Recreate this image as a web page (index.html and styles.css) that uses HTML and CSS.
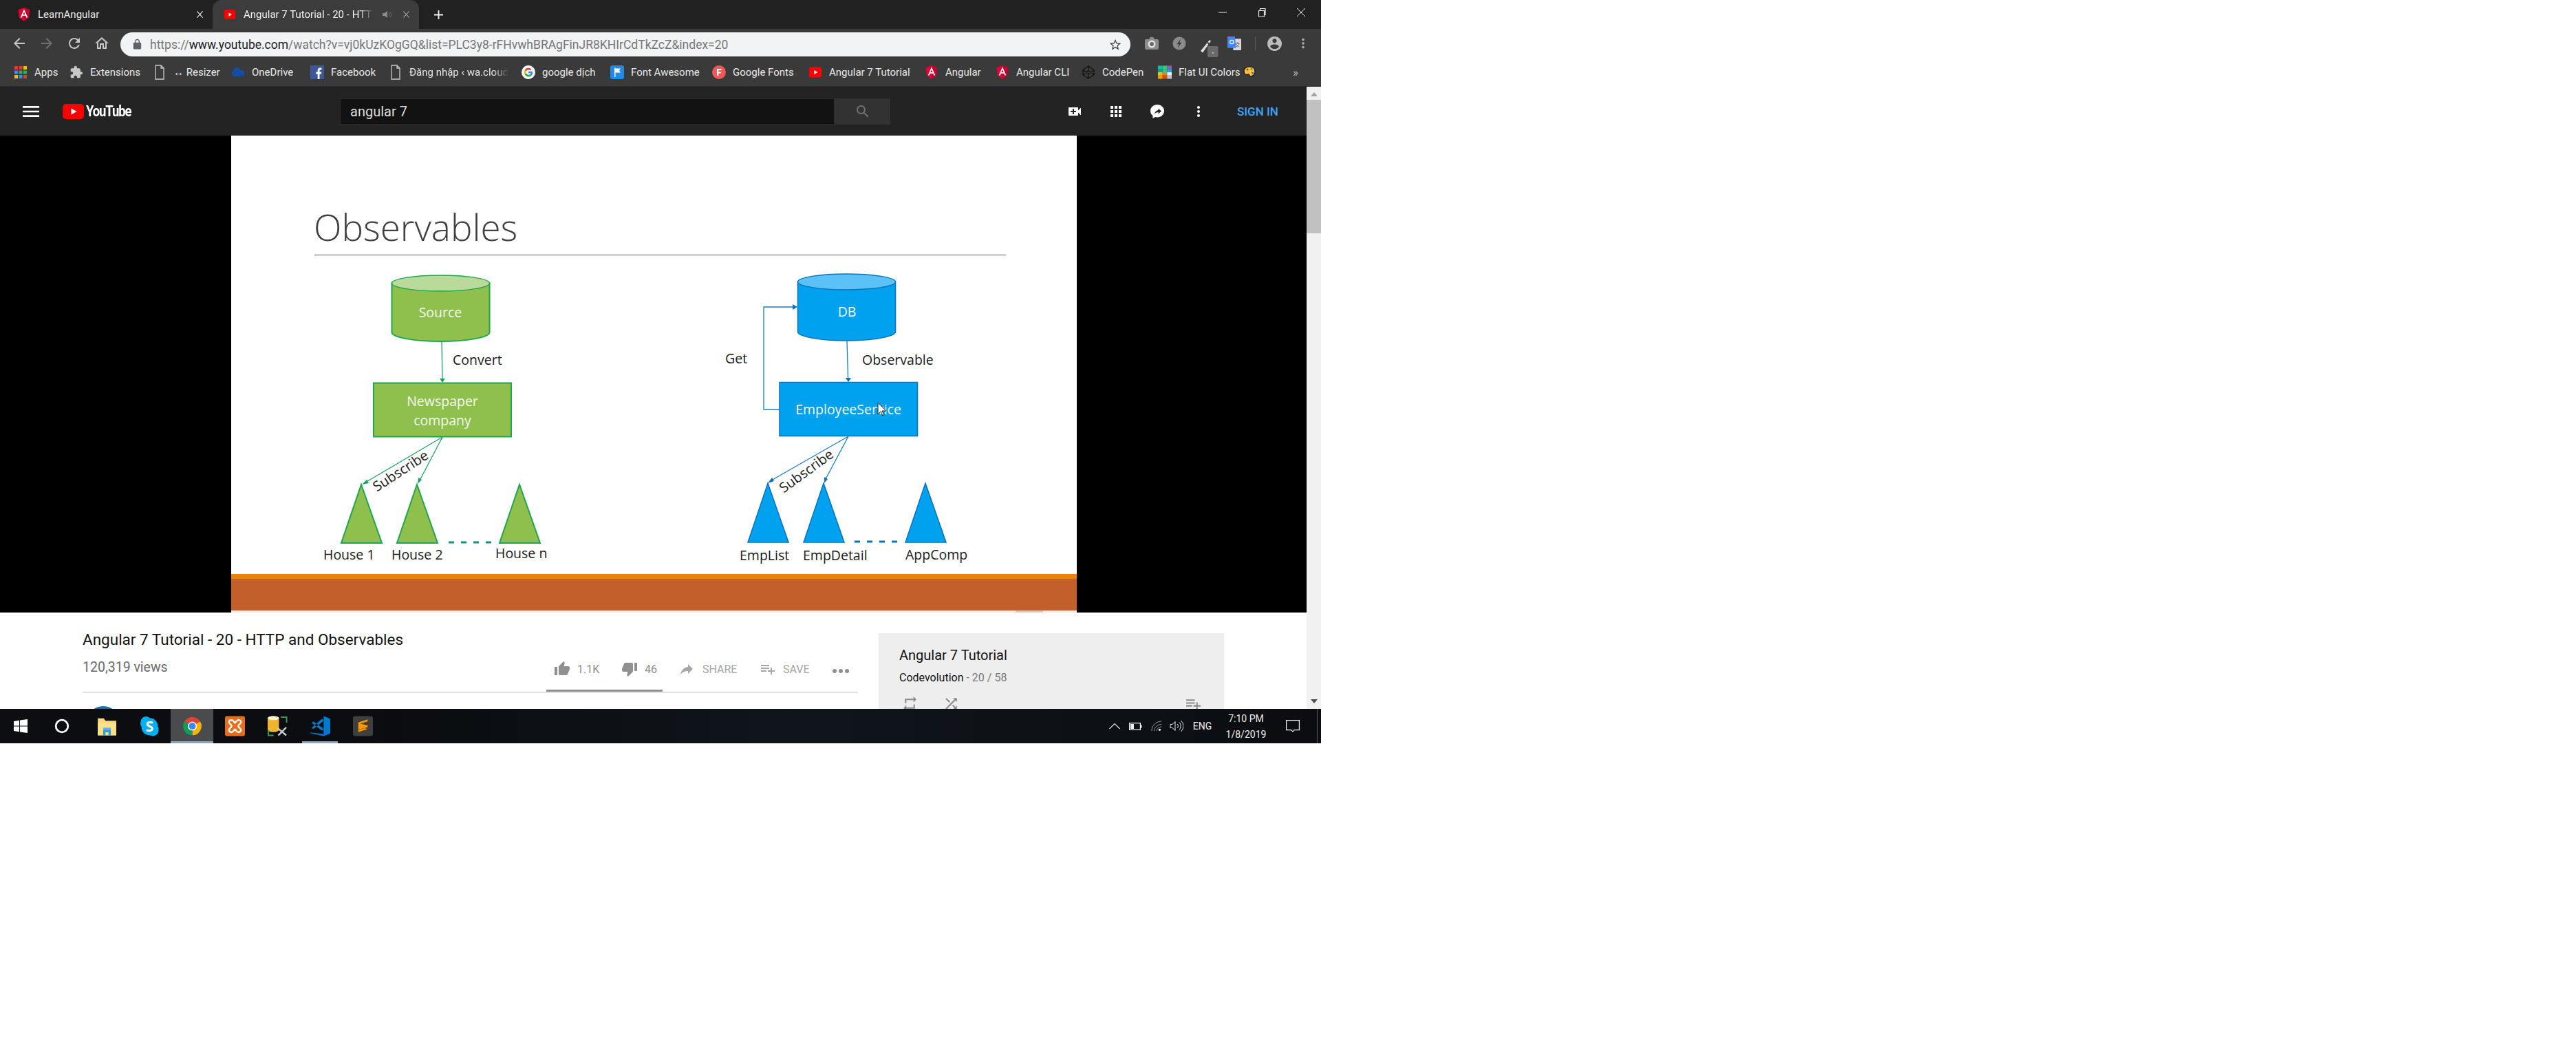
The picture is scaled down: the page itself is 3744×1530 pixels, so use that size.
FILE: index.html
```html
<!DOCTYPE html>
<html lang="en">
<head>
    <meta charset="UTF-8">
    <title>Angular 7 Tutorial - 20 - HTTP and Observables - YouTube</title>
    <link rel="stylesheet" href="styles.css">
</head>
<body>
    <svg class="sprites" width="0" height="0">
        <symbol id="i-angular" viewBox="0 0 24 26">
            <path d="M12 0L1 4l1.700 15L12 26z" fill="#dd0031"/>
            <path d="M12 0l11 4-1.700 15L12 26z" fill="#c3002f"/>
            <path d="M12 3L5 19h2.700l1.400-3.600h5.800l1.400 3.600H19zm-2 10l2-5 2 5z" fill="#fff"/>
        </symbol>
        <symbol id="i-yt" viewBox="0 0 24 24">
            <rect x="1" y="3" width="22" height="18" rx="4" fill="#f00"/>
            <path d="M10 8.500v7l6-3.500z" fill="#fff"/>
        </symbol>
        <symbol id="i-doc" viewBox="0 0 14 22">
            <path d="M1 1h8l4 4v16H1zM9 1v4h4" fill="none" stroke="#c8c8c8" stroke-width="1.300"/>
        </symbol>
        <symbol id="i-google" viewBox="0 0 24 24">
            <circle cx="12" cy="12" r="12" fill="#fff"/>
            <path d="M5.500 8.300A7.500 7.500 0 0 1 17.300 6.700l-2.300 2.200a4.400 4.400 0 0 0-6.700 1.200z" fill="#ea4335"/>
            <path d="M5.500 8.300l2.800 1.800a4.400 4.400 0 0 0 0 3.800l-2.800 1.800a7.500 7.500 0 0 1 0-7.400z" fill="#fbbc05"/>
            <path d="M5.500 15.700l2.800-1.800a4.400 4.400 0 0 0 6.800 1.500l2.600 2A7.500 7.500 0 0 1 5.500 15.700z" fill="#34a853"/>
            <path d="M12 10.600h7.200a7.500 7.500 0 0 1-1.500 6.800l-2.600-2a3.600 3.600 0 0 0 1.100-1.900H12z" fill="#4285f4"/>
        </symbol>
        <symbol id="i-plus-list" viewBox="0 0 24 24">
            <path d="M14 10H2v2h12v-2zm0-4H2v2h12V6zm4 8v-4h-2v4h-4v2h4v4h2v-4h4v-2h-4zM2 16h8v-2H2v2z"/>
        </symbol>
        <symbol id="i-dots" viewBox="0 0 24 24">
            <path d="M12 8c1.100 0 2-.9 2-2s-.9-2-2-2-2 .9-2 2 .9 2 2 2zm0 2c-1.100 0-2 .9-2 2s.9 2 2 2 2-.9 2-2-.9-2-2-2zm0 6c-1.100 0-2 .9-2 2s.9 2 2 2 2-.9 2-2-.9-2-2-2z"/>
        </symbol>
    </svg>

    <div class="screen">
        <!-- tabs -->
        <div class="tabstrip">
            <div class="tab">
                <svg class="favicon"><use href="#i-angular"/></svg>
                <span class="tab-title">LearnAngular</span>
                <svg class="tab-close" viewBox="0 0 12 12"><path d="M1.500 1l9 10M10.500 1l-9 10"/></svg>
            </div>
            <div class="tab tab-active">
                <svg class="favicon"><use href="#i-yt"/></svg>
                <span class="tab-title tab-fade">Angular 7 Tutorial - 20 - HTT</span>
                <svg class="tab-sound" viewBox="0 0 14 14"><path d="M1 5h3l4-3v10L4 9H1z" fill="#8a8a8a"/><path d="M10 4.500a3.500 3.500 0 0 1 0 5M12 3a6 6 0 0 1 0 8" fill="none" stroke="#6a6a6a"/></svg>
                <svg class="tab-close" viewBox="0 0 12 12"><path d="M1.500 1l9 10M10.500 1l-9 10"/></svg>
            </div>
            <svg class="new-tab" viewBox="0 0 16 16"><path d="M7 1h2v6h6v2H9v6H7V9H1V7h6z" fill="#eee"/></svg>
            <div class="win-controls">
                <svg viewBox="0 0 14 14"><path d="M1 7h12" stroke="#eee" fill="none"/></svg>
                <svg viewBox="0 0 14 14"><path d="M2.500 4.500h8v8.500h-8zM4.500 4.500v-3h7.500v9h-1.500" stroke="#eee" fill="none" stroke-width="1.200"/></svg>
                <svg viewBox="0 0 14 14"><path d="M1 1l12 12M13 1L1 13" stroke="#eee" fill="none"/></svg>
            </div>
        </div>

        <!-- address bar -->
        <div class="toolbar">
            <div class="nav-btns">
                <svg viewBox="0 0 24 24" class="nav-on"><path d="M20 11H7.830l5.590-5.590L12 4l-8 8 8 8 1.410-1.410L7.830 13H20v-2z"/></svg>
                <svg viewBox="0 0 24 24" class="nav-off"><path d="M12 4l-1.410 1.410L16.170 11H4v2h12.170l-5.580 5.590L12 20l8-8z"/></svg>
                <svg viewBox="0 0 24 24" class="nav-on"><path d="M17.650 6.350C16.200 4.900 14.210 4 12 4c-4.420 0-7.990 3.580-7.990 8s3.570 8 7.990 8c3.730 0 6.840-2.550 7.730-6h-2.080c-.82 2.330-3.040 4-5.650 4-3.310 0-6-2.690-6-6s2.690-6 6-6c1.660 0 3.140.69 4.220 1.780L13 11h7V4l-2.350 2.350z"/></svg>
                <svg viewBox="0 0 24 24" class="nav-on"><path d="M12 5.690l5 4.500V18h-2v-6H9v6H7v-7.810l5-4.500M12 3L2 12h3v8h6v-6h2v6h6v-8h3L12 3z"/></svg>
            </div>
            <div class="omnibox">
                <svg class="lock" viewBox="0 0 24 24"><path d="M18 8h-1V6c0-2.760-2.240-5-5-5S7 3.240 7 6v2H6c-1.100 0-2 .9-2 2v10c0 1.100.9 2 2 2h12c1.100 0 2-.9 2-2V10c0-1.100-.9-2-2-2zM9 6c0-1.660 1.340-3 3-3s3 1.340 3 3v2H9V6z"/></svg>
                <span class="url">https://<b>www.youtube.com</b>/watch?v=vj0kUzKOgGQ&amp;list=PLC3y8-rFHvwhBRAgFinJR8KHIrCdTkZcZ&amp;index=20</span>
                <svg class="star" viewBox="0 0 24 24"><path d="M22 9.240l-7.190-.62L12 2 9.190 8.630 2 9.240l5.460 4.730L5.820 21 12 17.270 18.180 21l-1.630-7.030L22 9.240zM12 15.400l-3.760 2.270 1-4.280-3.320-2.880 4.380-.38L12 6.100l1.710 4.040 4.380.38-3.320 2.880 1 4.280L12 15.400z"/></svg>
            </div>
            <div class="extensions">
                <svg viewBox="0 0 20 18"><path d="M6 3l2-3h4l2 3h4a2 2 0 0 1 2 2v11a2 2 0 0 1-2 2H2a2 2 0 0 1-2-2V5a2 2 0 0 1 2-2z" fill="#8c8c8c"/><circle cx="10" cy="10" r="5.500" fill="#e2e2e2"/><circle cx="10" cy="10" r="3" fill="#6a6a6a"/></svg>
                <svg viewBox="0 0 24 24"><circle cx="12" cy="12" r="11.500" fill="#8a8a8a"/><path d="M14.500 4L8 13.500h3.500L9.500 20l6.500-9.500h-3.500z" fill="#3a3a3a"/></svg>
                <svg viewBox="0 0 27 26" class="ext-pen"><path d="M1 17L14 1l2 1.500L4 19.500z" fill="#ddd"/><path d="M11 5l3 2.500" stroke="#333" stroke-width="2"/><rect x="11" y="10" width="15.500" height="16" rx="2" fill="#6a6a6a"/><rect x="18" y="19" width="1.600" height="1.600" fill="#ddd"/></svg>
                <svg viewBox="0 0 24 24"><rect x="10" y="4" width="14" height="20" fill="#d8d8d8"/><path d="M14 12h7M17.500 10v2M20 12c-.6 3-2.500 5-5 6M15 13c.6 2 2.500 4 5 5" stroke="#666" stroke-width="1.200" fill="none"/><path d="M0 0h13l2 20H0z" fill="#4285f4"/><circle cx="7.500" cy="9.500" r="3.200" fill="none" stroke="#fff" stroke-width="1.500"/></svg>
                <span class="ext-sep"></span>
                <svg viewBox="2 2 20 20" class="ext-avatar"><path d="M12 2C6.480 2 2 6.480 2 12s4.480 10 10 10 10-4.480 10-10S17.520 2 12 2zm0 3c1.660 0 3 1.340 3 3s-1.340 3-3 3-3-1.340-3-3 1.340-3 3-3zm0 14.200c-2.500 0-4.710-1.280-6-3.220.03-1.990 4-3.080 6-3.080 1.990 0 5.970 1.090 6 3.080-1.290 1.940-3.500 3.220-6 3.220z"/></svg>
                <svg viewBox="0 0 24 24" class="ext-dots"><use href="#i-dots"/></svg>
            </div>
        </div>

        <!-- bookmarks -->
        <div class="bookmarks">
            <a class="bm">
                <svg viewBox="0 0 20 20"><rect x="1" y="1" width="5" height="5" fill="#e53935"/><rect x="7.500" y="1" width="5" height="5" fill="#e53935"/><rect x="14" y="1" width="5" height="5" fill="#fbbc05"/><rect x="1" y="7.500" width="5" height="5" fill="#4285f4"/><rect x="7.500" y="7.500" width="5" height="5" fill="#34a853"/><rect x="14" y="7.500" width="5" height="5" fill="#34a853"/><rect x="1" y="14" width="5" height="5" fill="#fbbc05"/><rect x="7.500" y="14" width="5" height="5" fill="#4285f4"/><rect x="14" y="14" width="5" height="5" fill="#e53935"/></svg>
                <span>Apps</span>
            </a>
            <a class="bm">
                <svg viewBox="0 0 24 24"><path d="M20.500 11H19V7c0-1.100-.9-2-2-2h-4V3.500a2.500 2.500 0 0 0-5 0V5H4c-1.100 0-2 .9-2 2v3.800h1.500a2.700 2.700 0 0 1 0 5.400H2V20c0 1.100.9 2 2 2h3.800v-1.500a2.700 2.700 0 0 1 5.400 0V22H17c1.100 0 2-.9 2-2v-4h1.500a2.500 2.500 0 0 0 0-5z" fill="#c8c8c8"/></svg>
                <span>Extensions</span>
            </a>
            <a class="bm"><svg class="bm-doc"><use href="#i-doc"/></svg><span>↔ Resizer</span></a>
            <a class="bm">
                <svg viewBox="0 0 24 18"><path d="M10 1a6 6 0 0 1 6 5 5 5 0 0 1 7 5.500A4 4 0 0 1 20 16H5a4.500 4.500 0 0 1-1-8.800A6 6 0 0 1 10 1z" fill="#0f4fb0"/><path d="M2 14l9-7 10 9" stroke="#3a3a3a" fill="none"/></svg>
                <span>OneDrive</span>
            </a>
            <a class="bm">
                <svg viewBox="0 0 20 20"><rect width="20" height="20" fill="#3b5998"/><path d="M13.500 20v-7.500h2.400l.4-3h-2.800V7.800c0-.9.300-1.400 1.500-1.400h1.400V3.700c-.3 0-1.100-.1-2.100-.1-2.200 0-3.600 1.300-3.600 3.700v2.200H8.300v3h2.400V20z" fill="#fff"/></svg>
                <span>Facebook</span>
            </a>
            <a class="bm"><svg class="bm-doc"><use href="#i-doc"/></svg><span class="bm-fade">Đăng nhập ‹ wa.cloud</span></a>
            <a class="bm"><svg><use href="#i-google"/></svg><span>google dịch</span></a>
            <a class="bm">
                <svg viewBox="0 0 20 20"><rect width="20" height="20" rx="3" fill="#228ae6"/><path d="M6 3.500h1.500V17H6zM7.500 4.500h7.500l-2 3 2 3H7.500z" fill="#fff"/></svg>
                <span>Font Awesome</span>
            </a>
            <a class="bm">
                <svg viewBox="0 0 20 20"><circle cx="10" cy="10" r="10" fill="#f25757"/><path d="M7 5h6.500v2H9.200v2.400h3.600v2H9.200V15H7z" fill="#fff"/></svg>
                <span>Google Fonts</span>
            </a>
            <a class="bm"><svg><use href="#i-yt"/></svg><span>Angular 7 Tutorial</span></a>
            <a class="bm"><svg><use href="#i-angular"/></svg><span>Angular</span></a>
            <a class="bm"><svg><use href="#i-angular"/></svg><span>Angular CLI</span></a>
            <a class="bm">
                <svg viewBox="0 0 20 20"><path d="M10 1l8 5.500v7L10 19l-8-5.500v-7zM2 6.500l8 5.500 8-5.500M2 13.500L10 8l8 5.500M10 1v7M10 12v7" fill="none" stroke="#111" stroke-width="1.300"/></svg>
                <span>CodePen</span>
            </a>
            <a class="bm">
                <svg viewBox="0 0 21 20"><rect width="7" height="5" fill="#1abc9c"/><rect x="7" width="7" height="5" fill="#2ecc71"/><rect x="14" width="7" height="5" fill="#9b59b6"/><rect y="5" width="7" height="5" fill="#16a085"/><rect x="7" y="5" width="7" height="5" fill="#3dbb8a"/><rect x="14" y="5" width="7" height="5" fill="#3498db"/><rect y="10" width="7" height="5" fill="#f1c40f"/><rect x="7" y="10" width="7" height="5" fill="#e67e22"/><rect x="14" y="10" width="7" height="5" fill="#ecf0f1"/><rect y="15" width="7" height="5" fill="#f39c12"/><rect x="7" y="15" width="7" height="5" fill="#d35400"/><rect x="14" y="15" width="7" height="5" fill="#bdc3c7"/></svg>
                <span>Flat UI Colors</span>
                <svg class="palette" viewBox="0 0 18 17"><path d="M9 1c5 0 8 3 8 7s-3 7-6 7c-2 0-2-2-3-3s-3 1-5 0-2-3-2-5c0-4 4-6 8-6z" fill="#f5c242" stroke="#111" stroke-width="1.200"/><circle cx="6" cy="5" r="1.500" fill="#d33"/><circle cx="12" cy="4.500" r="1.300" fill="#3a3"/><circle cx="13.500" cy="10" r="1.500" fill="#36c"/></svg>
            </a>
            <span class="bm-more">»</span>
        </div>

        <div class="page">
            <div class="main">
                <!-- youtube masthead -->
                <header class="masthead">
                    <svg class="burger" viewBox="0 0 24 24"><path d="M3 18h18v-2H3v2zm0-5h18v-2H3v2zm0-7v2h18V6H3z"/></svg>
                    <div class="logo">
                        <svg class="logo-mark" viewBox="0 0 31 22"><rect width="31" height="22" rx="5" fill="#f00"/><path d="M12.500 6.500v9l8-4.500z" fill="#fff"/></svg>
                        <span class="logo-text">YouTube</span>
                    </div>
                    <div class="search">
                        <div class="search-input">angular 7</div>
                        <div class="search-btn">
                            <svg viewBox="0 0 24 24"><path d="M15.500 14h-.79l-.28-.27C15.410 12.590 16 11.110 16 9.500 16 5.910 13.090 3 9.500 3S3 5.910 3 9.500 5.910 16 9.500 16c1.610 0 3.090-.59 4.230-1.570l.27.28v.79l5 4.990L20.490 19l-4.990-5zm-6 0C7.010 14 5 11.990 5 9.500S7.010 5 9.500 5 14 7.010 14 9.500 11.990 14 9.500 14z"/></svg>
                        </div>
                    </div>
                    <div class="mast-icons">
                        <svg viewBox="0 0 24 24"><path d="M17 10.500V7c0-.55-.45-1-1-1H4c-.55 0-1 .45-1 1v10c0 .55.45 1 1 1h12c.55 0 1-.45 1-1v-3.500l4 4v-11l-4 4zM14 13h-3v3H9v-3H6v-2h3V8h2v3h3v2z"/></svg>
                        <svg viewBox="0 0 24 24"><path d="M4 8h4V4H4v4zm6 12h4v-4h-4v4zm-6 0h4v-4H4v4zm0-6h4v-4H4v4zm6 0h4v-4h-4v4zm6-10v4h4V4h-4zm-6 4h4V4h-4v4zm6 6h4v-4h-4v4zm0 6h4v-4h-4v4z"/></svg>
                        <svg viewBox="0 0 24 24"><path d="M12 2C6.500 2 2 6.100 2 11.200c0 2.800 1.400 5.300 3.500 7V22l3.300-2c1 .3 2.100.4 3.200.4 5.500 0 10-4.100 10-9.200S17.500 2 12 2z"/><path d="M13.500 7.500l4.500 4-4.500 4v-2.400c-2.500 0-4.200.8-5.500 2.600.5-2.600 2-5 5.500-5.600z" fill="#232323"/></svg>
                        <svg viewBox="0 0 24 24"><use href="#i-dots"/></svg>
                    </div>
                    <span class="signin">SIGN IN</span>
                </header>

                <!-- video, the slide is a picture on its own coordinates -->
                <div class="player">
                    <svg class="slide" viewBox="336 197 1229 693">
                        <rect x="336" y="197" width="1229" height="693" fill="#fff"/>
                        <text x="456" y="350" class="s-title">Observables</text>
                        <path d="M457 370.500h1005" stroke="#9a9a9a" stroke-width="1.500"/>

                        <!-- left: newspaper -->
                        <path d="M569.500 411v72c0 7 32 13 71 13s71-6 71-13v-72z" class="g-shape"/>
                        <ellipse cx="640.500" cy="411.500" rx="71" ry="11.500" fill="#bbd99a" stroke="#1fa64f" stroke-width="1.500"/>
                        <text x="640" y="461" class="s-in">Source</text>
                        <path d="M642 496l1 55" class="g-line"/>
                        <path d="M639 550h8l-4 6z" fill="#1fa06a"/>
                        <text x="658" y="530" class="s-label">Convert</text>
                        <rect x="543" y="556.500" width="200" height="78" class="g-shape"/>
                        <text x="643" y="590" class="s-in">Newspaper</text>
                        <text x="643" y="618" class="s-in">company</text>
                        <path d="M643 635l-112 66M643 635l-33 63" class="g-line"/>
                        <path d="M526 704l7-7 3 5zM607 703l1-9 5 3z" fill="#1fa06a"/>
                        <text transform="translate(586 690) rotate(-33)" class="s-sub">Subscribe</text>
                        <path d="M525 704l30 85h-59z" class="g-shape"/>
                        <path d="M606 704l30 85h-59z" class="g-shape"/>
                        <path d="M755 704l30 85h-59z" class="g-shape"/>
                        <path d="M652 788h63" stroke="#17917a" stroke-width="3" stroke-dasharray="8 10"/>
                        <text x="470" y="813" class="s-label">House 1</text>
                        <text x="569" y="813" class="s-label">House 2</text>
                        <text x="720" y="811" class="s-label">House n</text>

                        <!-- right: employee service -->
                        <path d="M1159.500 409v73c0 7 32 13 71 13s71-6 71-13v-73z" class="b-shape"/>
                        <ellipse cx="1230.500" cy="409.500" rx="71" ry="11.500" fill="#5cc1f7" stroke="#0b72b9" stroke-width="1.500"/>
                        <text x="1231" y="460" class="s-in">DB</text>
                        <path d="M1231 495l1.500 54" class="b-line"/>
                        <path d="M1229 549h8l-4 6z" fill="#0b72b9"/>
                        <text x="1253" y="530" class="s-label">Observable</text>
                        <rect x="1133" y="555.500" width="200.500" height="78" class="b-shape"/>
                        <text x="1233" y="602" class="s-in">EmployeeService</text>
                        <path d="M1133 595h-23V446h44" class="b-line"/>
                        <path d="M1152 442v8l7-4z" fill="#0b72b9"/>
                        <text x="1054" y="528" class="s-label">Get</text>
                        <path d="M1233 634l-112 64M1233 634l-33 62" class="b-line"/>
                        <path d="M1116 702l6-8 3 5zM1198 702l0-9 5 3z" fill="#0b72b9"/>
                        <text transform="translate(1176 690) rotate(-36)" class="s-sub">Subscribe</text>
                        <path d="M1116 702l30 86h-59z" class="b-shape"/>
                        <path d="M1197 702l30 86h-59z" class="b-shape"/>
                        <path d="M1345 702l30 86h-59z" class="b-shape"/>
                        <path d="M1242 787h64" stroke="#0b72b9" stroke-width="3" stroke-dasharray="8 10"/>
                        <text x="1075" y="814" class="s-label">EmpList</text>
                        <text x="1167" y="814" class="s-label">EmpDetail</text>
                        <text x="1316" y="813" class="s-label">AppComp</text>

                        <path d="M1276 585v17l4-4 3 6 2-1-3-6h6z" fill="#fff" stroke="#222"/>

                        <rect x="336" y="834" width="1229" height="7" fill="#e8830f"/>
                        <rect x="336" y="841" width="1229" height="46" fill="#c35f2b"/>
                        <rect x="336" y="887" width="1229" height="3" fill="#eeeae6"/>
                        <rect x="1476" y="887" width="40" height="3" fill="#cfcbc6"/>
                    </svg>
                </div>

                <!-- below the video -->
                <div class="below">
                    <div class="primary">
                        <h1 class="video-title">Angular 7 Tutorial - 20 - HTTP and Observables</h1>
                        <div class="meta">
                            <span class="views">120,319 views</span>
                            <div class="actions">
                                <span class="act"><svg viewBox="0 0 24 24"><path d="M1 21h4V9H1v12zm22-11c0-1.100-.9-2-2-2h-6.310l.95-4.570.03-.32c0-.41-.17-.79-.44-1.060L14.170 1 7.590 7.590C7.220 7.950 7 8.450 7 9v10c0 1.100.9 2 2 2h9c.83 0 1.540-.5 1.840-1.220l3.020-7.050c.09-.23.14-.47.14-.73v-2z"/></svg>1.1K</span>
                                <span class="act"><svg viewBox="0 0 24 24"><path d="M15 3H6c-.83 0-1.540.5-1.840 1.220l-3.020 7.050c-.09.23-.14.47-.14.73v2c0 1.100.9 2 2 2h6.310l-.95 4.570-.03.32c0 .41.17.79.44 1.060L9.830 23l6.590-6.590c.36-.36.58-.86.58-1.410V5c0-1.100-.9-2-2-2zm4 0v12h4V3h-4z"/></svg>46</span>
                                <span class="act act-light act-share"><svg viewBox="0 0 24 24"><path d="M14 9V5l7 7-7 7v-4.100c-5 0-8.500 1.600-11 5.100 1-5 4-10 11-11z"/></svg>SHARE</span>
                                <span class="act act-light"><svg viewBox="0 0 24 24"><use href="#i-plus-list"/></svg>SAVE</span>
                                <span class="more-dots"><i></i><i></i><i></i></span>
                            </div>
                        </div>
                        <div class="sentiment"></div>
                        <div class="rule"></div>
                        <div class="avatar"></div>
                    </div>
                    <aside class="playlist">
                        <div class="pl-title">Angular 7 Tutorial</div>
                        <div class="pl-sub"><span class="pl-owner">Codevolution</span> - 20 / 58</div>
                        <div class="pl-controls">
                            <svg viewBox="0 0 24 24"><path d="M7 7h10v3l4-4-4-4v3H5v6h2V7zm10 10H7v-3l-4 4 4 4v-3h12v-6h-2v4z"/></svg>
                            <svg viewBox="0 0 24 24"><path d="M10.590 9.170L5.410 4 4 5.410l5.170 5.170 1.420-1.410zM14.500 4l2.040 2.040L4 18.590 5.410 20 17.960 7.460 20 9.500V4h-5.500zm.33 9.410l-1.410 1.410 3.130 3.130L14.500 20H20v-5.500l-2.040 2.040-3.130-3.130z"/></svg>
                            <svg viewBox="0 0 24 24" class="pl-add"><use href="#i-plus-list"/></svg>
                        </div>
                    </aside>
                </div>
            </div>
            <div class="scrollbar">
                <span class="arrow-up"></span>
                <div class="thumb"></div>
                <span class="arrow-down"></span>
            </div>
        </div>

        <!-- windows taskbar -->
        <div class="taskbar">
            <div class="task task-win"><svg viewBox="0 0 20 20"><path d="M0 3l8-1.200V9.500H0zM9 1.600L20 0v9.500H9zM0 10.500h8v7.700L0 17zM9 10.500h11V20L9 18.400z" fill="#fff"/></svg></div>
            <div class="task task-cortana"><svg viewBox="0 0 20 20"><circle cx="10" cy="10" r="8" fill="none" stroke="#fff" stroke-width="2.500"/></svg></div>
            <div class="task"><svg viewBox="0 0 26 26"><path d="M1 3h8l2 3h14v19H1z" fill="#f8d775"/><rect x="1" y="9" width="24" height="16" fill="#fde08a"/><path d="M8 25v-8h10v8h-3v-4h-4v4z" fill="#2f9be0"/><rect x="8" y="15" width="10" height="3" fill="#5cb7f0"/></svg></div>
            <div class="task"><svg viewBox="0 0 26 28"><path d="M8 1a7 7 0 0 1 5 2 11 11 0 0 1 11 11 7 7 0 0 1 1 5 7.500 7.500 0 0 1-11 7.500A11 11 0 0 1 2 15 7 7 0 0 1 1 8a7 7 0 0 1 7-7z" fill="#00aff0"/><text x="13" y="21" class="sk">S</text></svg></div>
            <div class="task task-active"><svg viewBox="0 0 24 24"><path d="M12 12L2.470 6.500A11 11 0 0 1 21.530 6.500z" fill="#db4437"/><path d="M12 12l9.530-5.500A11 11 0 0 1 12 23z" fill="#f4b400"/><path d="M12 12v11A11 11 0 0 1 2.470 6.500z" fill="#0f9d58"/><circle cx="12" cy="12" r="5.400" fill="#fff"/><circle cx="12" cy="12" r="4.200" fill="#4285f4"/></svg></div>
            <div class="task"><svg viewBox="0 0 30 30"><rect width="30" height="30" rx="3" fill="#e4701e"/><path d="M6 9c0-3 4-4 6-2l3 3 3-3c2-2 6-1 6 2 0 2-2 3-3 4l-1 2 1 2c1 1 3 2 3 4 0 3-4 4-6 2l-3-3-3 3c-2 2-6 1-6-2 0-2 2-3 3-4l1-2-1-2C8 12 6 11 6 9z" fill="none" stroke="#fff" stroke-width="2.500"/></svg></div>
            <div class="task"><svg viewBox="0 0 30 30"><path d="M0 3a8.500 3 0 0 1 17 0v18a8.500 3 0 0 1-17 0z" fill="#f1b52c"/><ellipse cx="8.500" cy="3" rx="8.500" ry="3" fill="#fdf3d0"/><path d="M20 1.500h8.500V10M1 21v8h8" stroke="#3f9b4f" stroke-width="2" fill="none"/><path d="M15 18l13 11M28 17L16 29" stroke="#c9c9c9" stroke-width="2.500"/></svg></div>
            <div class="task task-open"><svg viewBox="0 0 30 30"><path d="M20 0l10 4v22l-10 4z" fill="#007acc"/><path d="M0 24.500L20 27v3L0 25.500z" fill="#007acc"/><path d="M2 10l2.500-2L19 18v3.500h-2zM2 17.500l2.500 2L19 8V4.500h-2z" fill="#007acc"/></svg></div>
            <div class="task"><svg viewBox="0 0 30 30"><rect width="30" height="30" rx="3" fill="#3f3f3f"/><path d="M22 5L8 9.500v5.500l14 4.500V14L11 11.500 22 8zM8 15v5.500L19 17zM22 19.500L8 24v-3l14-4.500z" fill="#ff9800"/></svg></div>
            <div class="tray">
                <svg viewBox="0 0 16 10"><path d="M.5 9L8 1.500 15.500 9" fill="none" stroke="#ddd" stroke-width="1.200"/></svg>
                <svg viewBox="0 0 19 11" class="tray-batt"><path d="M.6.6h15.800v9.800H.6z" fill="none" stroke="#eee" stroke-width="1.200"/><rect x="2" y="2" width="5" height="7" fill="#eee"/><rect x="17" y="3.500" width="1.500" height="4" fill="#eee"/></svg>
                <svg viewBox="0 0 18 18"><path d="M1 17C1 9 7 2 17 1M5 17c0-5 4-10 12-11M9 17c0-3 3-6 8-7" fill="none" stroke="#aaa"/><circle cx="14" cy="15" r="1.800" fill="#eee"/></svg>
                <svg viewBox="0 0 20 18" class="tray-sound"><path d="M1 6.500h3l4-4v13l-4-4H1z" fill="none" stroke="#eee"/><path d="M11 6a4 4 0 0 1 0 6M14 3.500a8 8 0 0 1 0 11M16.500 1a11 11 0 0 1 0 16" fill="none" stroke="#eee"/></svg>
                <span class="lang">ENG</span>
                <div class="clock"><span>7:10 PM</span><span>1/8/2019</span></div>
                <svg viewBox="0 0 20 18" class="notif"><path d="M.6.6h18.800v14h-7L10 17l-2.400-2.400H.6z" fill="none" stroke="#eee" stroke-width="1.200"/></svg>
                <span class="desk-line"></span>
            </div>
        </div>
    </div>
</body>
</html>
```

FILE: styles.css
```css
html, body {
    margin: 0;
    padding: 0;
    background-color: #fff;
}
body {
    width: 3744px;
    height: 1530px;
    overflow: hidden;
    font-family: Roboto, sans-serif;
}
.sprites {
    display: block;
    height: 0;
}
svg {
    display: block;
    flex: none;
}
.screen {
    width: 1920px;
    height: 1080px;
    display: flex;
    flex-direction: column;
    overflow: hidden;
}

/* tab strip */
.tabstrip {
    height: 42px;
    flex: none;
    display: flex;
    background-color: #212121;
    color: #e8e8e8;
    font-size: 15px;
}
.tab {
    width: 309px;
    height: 42px;
    box-sizing: border-box;
    padding-left: 25px;
    display: flex;
    align-items: center;
}
.tab-active {
    width: 300px;
    padding-left: 16px;
    background-color: #3c3c3c;
    border-radius: 13px 13px 0 0;
    color: #f2f2f2;
}
.favicon {
    width: 20px;
    height: 20px;
    margin-right: 10px;
}
.tab-active .favicon {
    width: 18px;
    height: 18px;
    margin-right: 11px;
}
.tab-title {
    width: 230px;
    white-space: nowrap;
}
.tab-fade {
    width: 190px;
    -webkit-mask-image: linear-gradient(to right, #000 88%, transparent);
    mask-image: linear-gradient(to right, #000 88%, transparent);
}
.tab-close {
    width: 11px;
    height: 12px;
    stroke: #eee;
    stroke-width: 1.200;
    fill: none;
}
.tab-active .tab-close {
    stroke: #999;
    margin-left: 16px;
}
.tab-sound {
    width: 14px;
    height: 14px;
    margin-left: 11px;
}
.new-tab {
    width: 15px;
    height: 15px;
    margin: 14px 0 0 21px;
}
.win-controls {
    margin-left: auto;
    display: flex;
    gap: 43px;
    padding: 11px 22px 0 0;
}
.win-controls svg {
    width: 14px;
    height: 14px;
}

/* toolbar */
.toolbar {
    height: 42px;
    flex: none;
    display: flex;
    align-items: flex-start;
    background-color: #3a3a3a;
}
.nav-btns {
    width: 175px;
    height: 42px;
    box-sizing: border-box;
    padding-left: 16px;
    display: flex;
    align-items: center;
    gap: 16px;
}
.nav-btns svg {
    width: 24px;
    height: 24px;
}
.nav-on {
    fill: #c8c8c8;
}
.nav-off {
    fill: #707070;
}
.omnibox {
    width: 1468px;
    height: 35px;
    margin-top: 5px;
    box-sizing: border-box;
    padding-left: 16px;
    display: flex;
    align-items: center;
    background-color: #f1f3f4;
    border-radius: 18px;
}
.lock {
    width: 17px;
    height: 17px;
    fill: #5f6368;
}
.url {
    margin-left: 10px;
    font-size: 17.500px;
    color: #777;
    white-space: nowrap;
}
.url b {
    font-weight: 400;
    color: #202124;
}
.star {
    width: 20px;
    height: 20px;
    margin-left: auto;
    margin-right: 12px;
    fill: #444;
}
.extensions {
    flex: 1;
    height: 42px;
    display: flex;
    align-items: center;
    padding-left: 21px;
    gap: 20px;
}
.extensions svg {
    width: 20px;
    height: 20px;
}
.ext-sep {
    width: 1px;
    height: 20px;
    margin-right: -3px;
    background-color: #5a5a5a;
}
.extensions .ext-pen {
    width: 27px;
    height: 26px;
    margin: 14px -7px 0 0;
}
.extensions .ext-avatar {
    width: 21px;
    height: 21px;
    fill: #bdbdbd;
}
.extensions .ext-dots {
    width: 22px;
    height: 24px;
    fill: #aaa;
}

/* bookmarks */
.bookmarks {
    height: 42px;
    flex: none;
    box-sizing: border-box;
    padding-left: 20px;
    border-bottom: 1px solid #2c2c2c;
    display: grid;
    grid-template-columns: 81px 124px 111px 115px 117px 190px 129px 148px 140px 169px 103px 125px 111px 196px 1fr;
    align-items: center;
    background-color: #3a3a3a;
    color: #e8e8e8;
    font-size: 15px;
}
.bm {
    display: flex;
    align-items: center;
    gap: 10px;
    white-space: nowrap;
}
.bm svg {
    width: 20px;
    height: 20px;
}
.bm .bm-doc {
    width: 14px;
    height: 22px;
    margin-right: 3px;
}
.bm-fade {
    -webkit-mask-image: linear-gradient(to right, #000 85%, transparent);
    mask-image: linear-gradient(to right, #000 85%, transparent);
}
.bm .palette {
    width: 18px;
    height: 17px;
    margin-left: -6px;
}
.bm-more {
    color: #bbb;
    font-size: 17px;
}

/* page */
.page {
    flex: 1;
    min-height: 0;
    display: flex;
    background-color: #fff;
}
.main {
    width: 1899px;
    overflow: hidden;
}
.masthead {
    height: 71px;
    display: flex;
    align-items: center;
    background-color: #232323;
}
.burger {
    width: 32px;
    height: 32px;
    margin-left: 29px;
    fill: #fff;
}
.logo {
    width: 403px;
    margin-left: 30px;
    display: flex;
    align-items: center;
    gap: 3px;
}
.logo-mark {
    width: 31px;
    height: 22px;
}
.logo-text {
    color: #fff;
    font-size: 22px;
    font-weight: 700;
    letter-spacing: -1.300px;
    transform: scaleX(.84);
    transform-origin: left center;
}
.search {
    width: 800px;
    height: 38px;
    display: flex;
}
.search-input {
    width: 719px;
    box-sizing: border-box;
    padding-left: 14px;
    background-color: #121212;
    border: 1px solid #2b2b2b;
    color: #ddd;
    font-size: 20px;
    line-height: 36px;
}
.search-btn {
    flex: 1;
    display: flex;
    align-items: center;
    justify-content: center;
    background-color: #323232;
}
.search-btn svg {
    width: 24px;
    height: 24px;
    fill: #6f6f6f;
}
.mast-icons {
    margin-left: 256px;
    display: flex;
    gap: 36px;
}
.mast-icons svg {
    width: 24px;
    height: 24px;
    fill: #fff;
}
.signin {
    margin-left: 44px;
    color: #3ea6ff;
    font-size: 17px;
    font-weight: 500;
}

/* player */
.player {
    height: 693px;
    padding-left: 336px;
    background-color: #000;
}
.slide {
    width: 1229px;
    height: 693px;
}
.slide text {
    font-family: "Open Sans", sans-serif;
}
.slide .s-title {
    font-size: 53px;
    font-weight: 300;
    fill: #404040;
}
.slide .s-in {
    font-size: 19.500px;
    fill: #f2f9ec;
    text-anchor: middle;
}
.slide .s-label {
    font-size: 19.500px;
    fill: #1a1a1a;
}
.slide .s-sub {
    font-size: 20px;
    fill: #1a1a1a;
    text-anchor: middle;
}
.g-shape {
    fill: #8fc04e;
    stroke: #1fa64f;
    stroke-width: 2;
}
.g-line {
    fill: none;
    stroke: #1fa06a;
    stroke-width: 1.300;
}
.b-shape {
    fill: #00a2f0;
    stroke: #0b72b9;
    stroke-width: 1.500;
}
.b-line {
    fill: none;
    stroke: #1a7fc4;
    stroke-width: 1.300;
}

/* below the video */
.below {
    display: flex;
    gap: 30px;
    padding-left: 120px;
}
.primary {
    width: 1127px;
}
.video-title {
    margin: 26px 0 0;
    font-size: 22.500px;
    font-weight: 400;
    line-height: 26px;
    color: #111;
}
.meta {
    height: 60px;
    display: flex;
    align-items: center;
}
.views {
    margin-bottom: 6px;
    font-size: 19.500px;
    color: #6a6a6a;
}
.actions {
    width: 442px;
    margin-left: auto;
    display: grid;
    grid-template-columns: 98px 86px 115px 106px auto;
    align-items: center;
    color: #8e8e8e;
    font-size: 16px;
}
.act {
    display: flex;
    align-items: center;
    gap: 10px;
    fill: #909090;
}
.act svg {
    width: 24px;
    height: 24px;
}
.act-light {
    color: #a6a6a6;
    fill: #a6a6a6;
}
.act-share {
    margin-left: -3px;
    gap: 11px;
}
.more-dots {
    display: flex;
    gap: 3px;
    padding-top: 5px;
}
.more-dots i {
    width: 6px;
    height: 6px;
    border-radius: 50%;
    background-color: #909090;
}
.sentiment {
    width: 169px;
    height: 3px;
    margin-left: 674px;
    background-color: #909090;
}
.rule {
    height: 2px;
    background-color: #e3e3e3;
}
.avatar {
    width: 48px;
    height: 48px;
    margin: 19px 0 0 6px;
    border-radius: 50%;
    background-color: #1272b8;
}
.playlist {
    width: 502px;
    height: 140px;
    margin-top: 30px;
    box-sizing: border-box;
    padding: 20px 30px 0;
    background-color: #eee;
}
.pl-title {
    font-size: 20px;
    line-height: 24px;
    color: #111;
}
.pl-sub {
    margin-top: 11px;
    font-size: 16px;
    line-height: 20px;
    color: #777;
}
.pl-owner {
    color: #111;
}
.pl-controls {
    margin: 15px 0 0 3px;
    display: flex;
    gap: 35px;
    fill: #8a8a8a;
}
.pl-controls svg {
    width: 25px;
    height: 25px;
}
.pl-controls .pl-add {
    margin-left: auto;
    margin-right: 2px;
}

/* scrollbar */
.scrollbar {
    flex: 1;
    display: flex;
    flex-direction: column;
    align-items: center;
    background-color: #f1f1f1;
}
.arrow-up {
    margin-top: 8px;
    border: 5px solid transparent;
    border-top: 0;
    border-bottom: 6px solid #a3a3a3;
}
.thumb {
    width: 100%;
    height: 194px;
    margin-top: 5px;
    background-color: #c1c1c1;
}
.arrow-down {
    margin-top: auto;
    margin-bottom: 8px;
    border: 5px solid transparent;
    border-bottom: 0;
    border-top: 6px solid #505050;
}

/* taskbar */
.taskbar {
    height: 50px;
    flex: none;
    display: flex;
    background: linear-gradient(to right, #0c0e11, #0a0c0f 30%, #10151b 60%, #0b0d10);
}
.task {
    width: 62px;
    height: 50px;
    box-sizing: border-box;
    display: flex;
    align-items: center;
    justify-content: center;
}
.task svg {
    width: 29px;
    height: 30px;
}
.task-win svg {
    width: 20px;
    height: 20px;
    margin-right: 2px;
}
.task-cortana svg {
    width: 22px;
    height: 22px;
    margin-right: 6px;
}
.task-active {
    background-color: #4a4b4d;
    border-bottom: 3px solid #8ba3c4;
}
.task-active svg {
    margin-top: 3px;
}
.task-open {
    border-bottom: 3px solid;
    border-image: linear-gradient(to right, transparent 6px, #8ba3c4 6px, #8ba3c4 56px, transparent 56px) 1;
}
.task-open svg {
    margin-top: 3px;
}
.sk {
    font-family: "Open Sans", sans-serif;
    font-size: 20px;
    font-weight: 700;
    fill: #fff;
    text-anchor: middle;
}
.tray {
    margin-left: auto;
    height: 50px;
    display: grid;
    grid-template-columns: 30px 30px 31px 28px 47px 80px 56px 7px 1px 5px;
    align-items: center;
    justify-items: center;
    color: #eee;
    font-size: 14px;
}
.tray svg {
    width: 16px;
    height: 16px;
}
.tray .tray-batt {
    width: 19px;
    height: 11px;
}
.tray .tray-sound {
    width: 20px;
    height: 18px;
}
.tray .notif {
    width: 20px;
    height: 18px;
}
.clock {
    display: flex;
    flex-direction: column;
    align-items: center;
    gap: 3px;
    line-height: 20px;
}
.desk-line {
    grid-column: 9;
    width: 1px;
    height: 50px;
    background-color: #555;
}
```
